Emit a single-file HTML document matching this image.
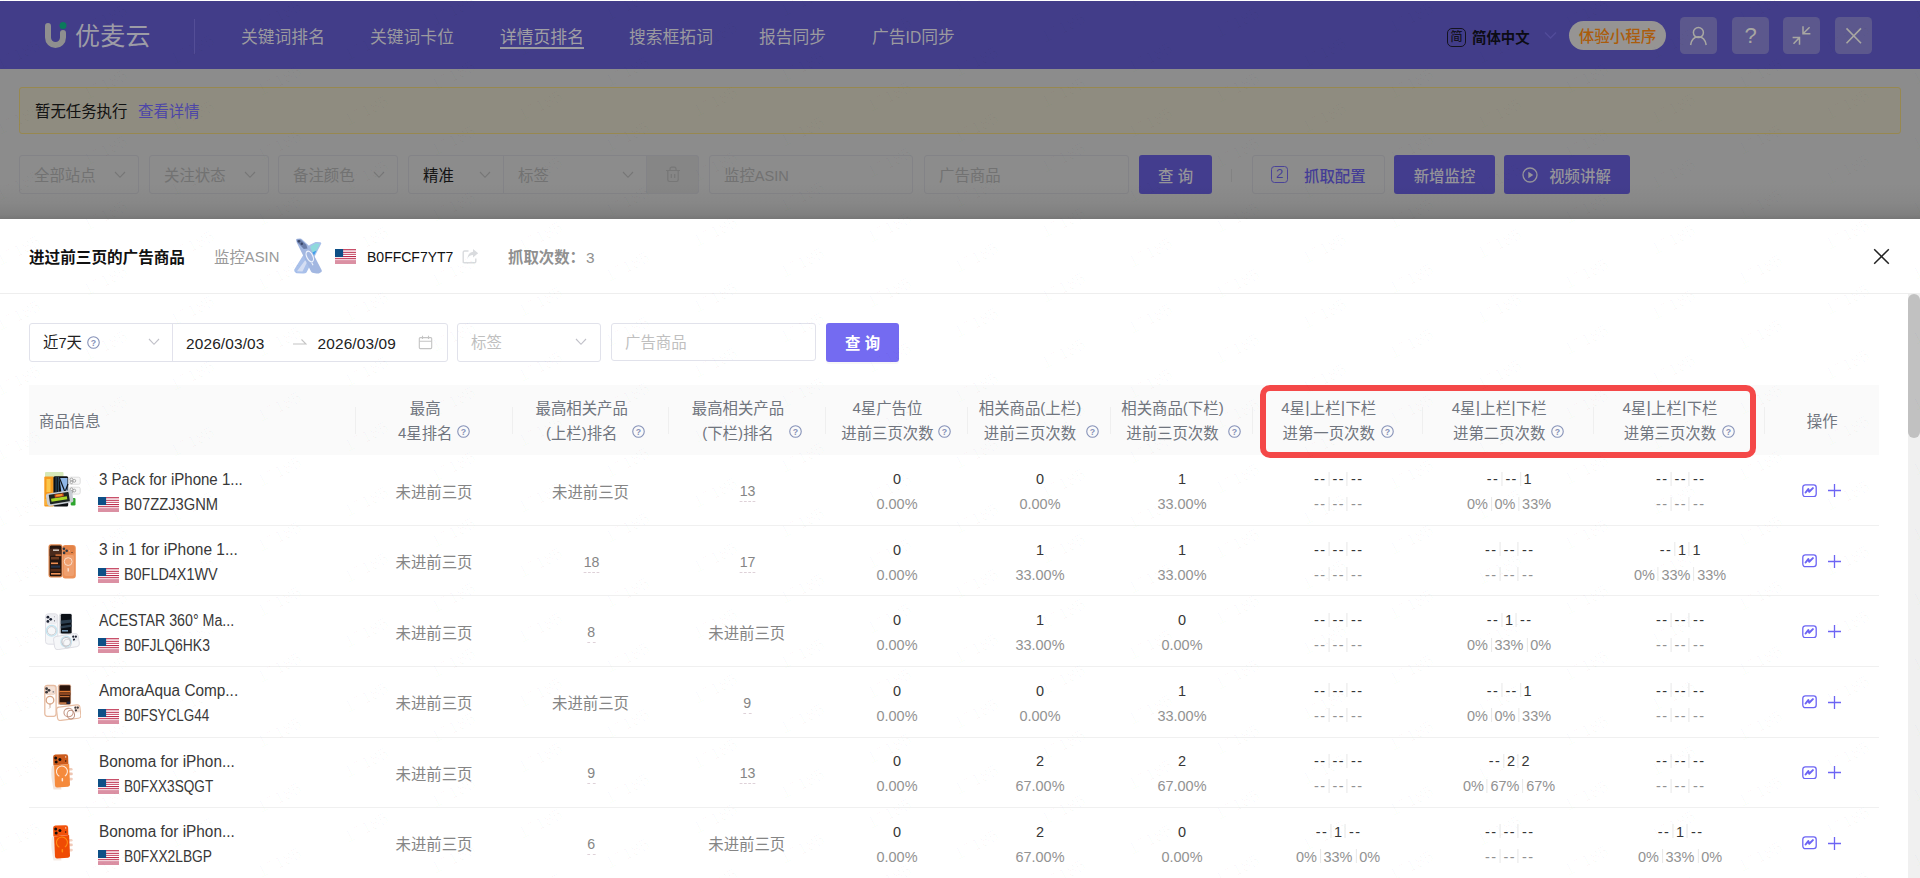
<!DOCTYPE html>
<html lang="zh-CN">
<head>
<meta charset="utf-8">
<title>优麦云 - 详情页排名</title>
<style>
*{box-sizing:border-box;margin:0;padding:0}
html,body{width:1920px;height:878px;overflow:hidden}
body{font-family:"Liberation Sans","Noto Sans CJK SC",sans-serif;font-size:15.4px;color:#222;background:#8c8c8c;position:relative}
.abs{position:absolute}
svg{display:block}

/* ---------- dimmed page (behind mask) ---------- */
#topline{position:absolute;left:0;top:0;width:1920px;height:1px;background:#fff}
#hdr{position:absolute;left:0;top:1px;width:1920px;height:68px;background:#423d89}
#logo{position:absolute;left:44px;top:20px;width:26px;height:30px}
#brand{position:absolute;left:75px;top:16px;font-size:25px;line-height:38px;color:#9d9ca6;letter-spacing:0.2px;white-space:nowrap}
#hdiv{position:absolute;left:194px;top:18px;width:1px;height:35px;background:#544e97}
.nav{position:absolute;top:24px;font-size:16.8px;line-height:25px;color:#9b9a9f;white-space:nowrap}
.nav.on{color:#a09fa3}
.nav.on:after{content:"";position:absolute;left:0;right:0;bottom:1px;height:2px;background:#9c9ba3}
#lang-ic{position:absolute;left:1447px;top:26.5px;width:19px;height:19px;border:1.7px solid #14131f;border-radius:5px;font-size:12.4px;font-weight:500;line-height:17.6px;text-align:center;color:#14131f}
#lang{position:absolute;left:1472px;top:25.5px;font-size:14.4px;line-height:22px;font-weight:bold;color:#0c0c14;white-space:nowrap}
#pill{position:absolute;left:1569px;top:20px;width:97px;height:29px;border-radius:15px;background:#969493;color:#ab5c0c;font-weight:500;font-size:15.5px;line-height:32px;text-align:center;white-space:nowrap}
.hbtn{position:absolute;top:16px;width:37px;height:37px;border-radius:4.5px;background:#5c588d}

#alert{position:absolute;left:19px;top:87px;width:1882px;height:47px;border:1px solid #978850;border-radius:3px;background:#8f8c80}
#alert span{position:absolute;top:12px;line-height:24px;font-size:15.4px;white-space:nowrap}
.fsel{position:absolute;top:155px;height:39px;border:1px solid #838387;border-radius:3px;font-size:15.4px;line-height:37px;color:#727272;white-space:nowrap}
.fsel b{position:absolute;left:14px;top:1px;font-weight:400}
.fsel i{position:absolute;top:14px;width:11px;height:8px}
.btnp{position:absolute;top:155px;height:39px;border-radius:3px;background:#433d8e;color:#959499;font-size:15.4px;font-weight:500;line-height:43.6px;text-align:center;white-space:nowrap}

/* ---------- drawer ---------- */
#shadow{position:absolute;left:0;top:183px;width:1920px;height:36px;background:linear-gradient(to bottom,rgba(0,0,0,0) 0%,rgba(0,0,0,.035) 55%,rgba(0,0,0,.09) 88%,rgba(0,0,0,.16) 100%)}
#drawer{position:absolute;left:0;top:219px;width:1920px;height:659px;background:#fff;overflow:hidden}
#dhead{position:absolute;left:0;top:0;width:1920px;height:75px;border-bottom:1px solid #eeeeee}
#dhead .t{position:absolute;top:27px;line-height:24px;white-space:nowrap}
.l{font-size:14.6px}
.l.h{position:relative;top:-1px;font-size:15px}
.bar{position:relative;top:-1.5px;font-size:17px;margin:0 .2px}
.flag{display:block}
.dbox{position:absolute;border:1px solid #e1e2eb;border-radius:3px;background:#fff}
.dt{position:absolute;line-height:24px;white-space:nowrap}
.th{position:absolute;line-height:25px;color:#70757e;white-space:nowrap}
.thc{position:absolute;width:300px;height:50px;display:flex;justify-content:center}
.thb{display:flex;align-items:flex-end}
.thb .tx{text-align:center;line-height:25px;color:#70757e;white-space:nowrap}
.thb .qi{display:block;margin-bottom:7.8px}
#tbody{position:absolute;left:29px;top:0;width:1849.5px}
.row{position:absolute;left:0;width:1849.5px;height:70.5px}
.rb{position:absolute;left:0;width:1849.5px;height:1px;background:#f0f0f0}
.pt{position:absolute;left:70.1px;top:11.5px;line-height:25px;font-size:16px;color:#383838;white-space:nowrap}
.pa{position:absolute;left:95px;top:36.5px;line-height:25px;font-size:16px;color:#383838;white-space:nowrap}
.cc{position:absolute;top:23px;width:120px;text-align:center;line-height:25px;white-space:nowrap}
.g{color:#858585}
.du{display:inline-block;line-height:20px;border-bottom:1px dashed #dccfd6;transform:scaleX(.92)}
.c2{position:absolute;top:11px;width:120px;text-align:center;white-space:nowrap}
.n1{line-height:25px;color:#363636}
.n2{line-height:25px;color:#929292}
.c2>.n1,.c2>.n2{transform:scaleX(.94)}
.tl{display:flex;justify-content:center;align-items:center;height:25px}
.tl i{display:block;width:1px;height:14px;background:#e6e6e6;margin:0 3.4px 0 3.6px}
.tl .dd{letter-spacing:1.5px;margin-right:-1.5px}
.tl .nn{margin:0 -.45px}
#wml{position:absolute;left:0;top:0;width:1920px;height:878px;overflow:hidden;pointer-events:none}
#wml b{position:absolute;width:48px;height:20px;font-weight:400;font-size:17px;line-height:20px;color:rgba(0,0,0,.027);transform:rotate(-27deg);white-space:nowrap}
</style>
</head>
<body>
<!-- page behind the mask -->
<div id="topline"></div>
<header id="hdr">
  <svg id="logo" viewBox="0 0 26 30"><path d="M4 5V16.500A7.500 7.500 0 0 0 19 16.500V12" fill="none" stroke="#8f8f8f" stroke-width="6" stroke-linecap="round"/><circle cx="19" cy="4.600" r="3.500" fill="#0b7a5c"/></svg>
  <div id="brand">优麦云</div>
  <div id="hdiv"></div>
  <a class="nav" style="left:241px">关键词排名</a>
  <a class="nav" style="left:370px">关键词卡位</a>
  <a class="nav on" style="left:500px">详情页排名</a>
  <a class="nav" style="left:629px">搜索框拓词</a>
  <a class="nav" style="left:759px">报告同步</a>
  <a class="nav" style="left:872px">广告<span style="font-size:15.600px">ID</span>同步</a>
  <div id="lang-ic">简</div>
  <div id="lang">简体中文</div>
  <svg class="abs" style="left:1543.5px;top:30px" width="13" height="9" viewBox="0 0 13 9"><path d="M1 1.500l5.500 5.500L12 1.500" fill="none" stroke="#524c9a" stroke-width="1.300"/></svg>
  <div id="pill">体验小程序</div>
  <div class="hbtn" style="left:1680px"><svg width="37" height="37" viewBox="0 0 37 37"><circle cx="18.4" cy="15.6" r="5" fill="none" stroke="#a8a7a2" stroke-width="1.5"/><path d="M10.6 28c.9-5.200 4-8.200 7.800-8.200s6.900 3 7.800 8.200" fill="none" stroke="#a8a7a2" stroke-width="1.5"/></svg></div>
  <div class="hbtn" style="left:1732px;color:#a8a7a2;font-size:22px;line-height:38px;text-align:center">?</div>
  <div class="hbtn" style="left:1783px"><svg width="37" height="37" viewBox="0 0 37 37"><path d="M20 9.300V16.800H27.400M20.300 16.500L26.600 10.300M9.600 20.600H16.500V27.700M16.200 20.900L10.500 26.700" fill="none" stroke="#a8a7a2" stroke-width="1.500"/></svg></div>
  <div class="hbtn" style="left:1835px"><svg width="37" height="37" viewBox="0 0 37 37"><path d="M11.500 11.400L26 26.300M26 11.400L11.500 26.300" fill="none" stroke="#a8a7a2" stroke-width="1.600"/></svg></div>
</header>

<div id="alert"><span style="left:15px;color:#111">暂无任务执行</span><span style="left:118px;color:#4d46a8">查看详情</span></div>

<div class="fsel" style="left:19px;width:120px"><b>全部站点</b><svg class="abs" style="left:94px;top:15px" width="12" height="8" viewBox="0 0 12 8"><path d="M1 1l5 5.3L11 1" fill="none" stroke="#767676" stroke-width="1.1"/></svg></div>
<div class="fsel" style="left:149px;width:120px"><b>关注状态</b><svg class="abs" style="left:94px;top:15px" width="12" height="8" viewBox="0 0 12 8"><path d="M1 1l5 5.3L11 1" fill="none" stroke="#767676" stroke-width="1.1"/></svg></div>
<div class="fsel" style="left:278px;width:120px"><b>备注颜色</b><svg class="abs" style="left:94px;top:15px" width="12" height="8" viewBox="0 0 12 8"><path d="M1 1l5 5.3L11 1" fill="none" stroke="#767676" stroke-width="1.1"/></svg></div>
<div class="fsel" style="left:408px;width:96px;color:#141414;border-radius:3px 0 0 3px"><b>精准</b><svg class="abs" style="left:70px;top:15px" width="12" height="8" viewBox="0 0 12 8"><path d="M1 1l5 5.3L11 1" fill="none" stroke="#767676" stroke-width="1.1"/></svg></div>
<div class="fsel" style="left:503px;width:144px;border-radius:0"><b>标签</b><svg class="abs" style="left:118px;top:15px" width="12" height="8" viewBox="0 0 12 8"><path d="M1 1l5 5.3L11 1" fill="none" stroke="#767676" stroke-width="1.1"/></svg></div>
<div class="fsel" style="left:646px;width:53px;background:#868686;border-radius:0 3px 3px 0"><svg class="abs" style="left:18px;top:10px" width="16" height="17" viewBox="0 0 16 17"><path d="M1 4.500h14M5 4.500V3c0-1 .8-1.800 1.800-1.800h2.400c1 0 1.800.8 1.800 1.800v1.500M2.800 4.500v9.300c0 1 .8 1.700 1.700 1.700h7c.9 0 1.700-.7 1.700-1.700V4.500M6.300 8v4M9.700 8v4" fill="none" stroke="#777" stroke-width="1.200"/></svg></div>
<div class="fsel" style="left:709px;width:204px"><b>监控<span class="l">ASIN</span></b></div>
<div class="fsel" style="left:924px;width:205px"><b>广告商品</b></div>
<div class="btnp" style="left:1139px;width:73px">查 询</div>
<div class="abs" style="left:1231px;top:169px;width:1px;height:13px;background:#828282"></div>
<div class="fsel" style="left:1252px;width:133px;color:#443d96;font-weight:500"><div class="abs" style="left:18px;top:10px;width:17px;height:17px;border:1.300px solid #4a4399;border-radius:3.500px;font-size:13px;line-height:14.500px;text-align:center;font-weight:400">2</div><b style="left:51px;top:2.3px;font-weight:500">抓取配置</b></div>
<div class="btnp" style="left:1394px;width:101px">新增监控</div>
<div class="btnp" style="left:1504px;width:126px;padding-left:26px"><svg class="abs" style="left:18px;top:12px" width="16" height="16" viewBox="0 0 16 16"><circle cx="8" cy="8" r="7" fill="none" stroke="#959499" stroke-width="1.300"/><path d="M6.300 4.800v6.400L11.300 8z" fill="#959499"/></svg>视频讲解</div>

<div id="shadow"></div>

<!-- drawer -->
<section id="drawer">
<!--DS-->

  <div id="dhead">
    <div class="t" style="left:29px;font-weight:bold;font-size:15.6px;color:#111">进过前三页的广告商品</div>
    <div class="t" style="left:214px;color:#999">监控<span class="l" style="font-size:14.8px;position:relative;top:-1px">ASIN</span></div>
    <svg class="abs" style="left:294px;top:19px" width="28" height="36" viewBox="0 0 28 36">
      <path d="M15.500 7L21.500 4Q27.500 3.600 27.300 5.500L12.500 34.500Q11.500 35.600 9 35.500L2.500 35.300Q-.3 34 .3 31.500z" fill="#a9c0ea"/>
      <path d="M16.500 8.200L22 5.300L25.800 6L18.500 20z" fill="#8ed9dc"/><path d="M18.500 20L22.500 12.500L14 16.500L11 22.500z" fill="#3f9cec"/><path d="M11 22.500L14.500 21L8.500 33.500L3 33.300z" fill="#d5def3"/>
      <path d="M2.100 2Q2 .6 3.500 .7L6 .5Q7.300 .6 8.500 1.800L15.200 8.100L27.600 32Q28.200 33.500 27 34.300L24.800 35.500Q23.500 35.800 21 35.300L18.500 34.800Q17.500 34.500 17 33.500L2.600 4.200z" fill="#a2b7e1"/>
      <path d="M2.800 1.800L6.500 1.400L12.300 6.800L13.500 10.500L9.800 11L3.200 4z" fill="#6b7da9"/><circle cx="5" cy="3.300" r="1.200" fill="#3a4668"/><circle cx="7.800" cy="5.800" r="1.200" fill="#3a4668"/>
      <ellipse cx="15.800" cy="18.500" rx="3" ry="5.700" transform="rotate(-26 15.800 18.500)" fill="none" stroke="#eef3fc" stroke-width="1.200"/><path d="M17.800 24.800L19 27.300" stroke="#eef3fc" stroke-width="1.100" fill="none"/>
    </svg>
    <div class="abs" style="left:335px;top:30px"><svg class="flag" width="21" height="15" viewBox="0 0 21 15"><rect width="21" height="15" fill="#fff"/><rect width="21" height="1.5" fill="#c8506a"/><rect y="1.5" width="21" height="1.5" fill="#f3d5dc"/><rect y="3" width="21" height="1.1" fill="#c8506a"/><rect y="4.1" width="21" height="1" fill="#f5e3e7"/><rect y="5.1" width="21" height=".9" fill="#c8506a"/><rect y="7.1" width="21" height="1" fill="#b5163a"/><rect y="9" width="21" height="1.1" fill="#c8506a"/><rect y="10.1" width="21" height="1" fill="#f0cdd5"/><rect y="11.1" width="21" height="3.9" fill="#db90a3"/><rect width="8.1" height="8" fill="#0d4f86"/></svg></div>
    <div class="t" style="left:367px;top:26px;color:#111"><span class="" style="display:inline-block;transform:scaleX(0.91);transform-origin:left center;">B0FFCF7YT7</span></div>
    <svg class="abs" style="left:462px;top:29px" width="17" height="16" viewBox="0 0 17 16"><path d="M6.500 3H2.500c-.8 0-1.300.6-1.300 1.300v9.200c0 .8.600 1.300 1.300 1.300h10c.8 0 1.300-.6 1.300-1.300V10.500" fill="none" stroke="#d9dbde" stroke-width="1.400"/><path d="M11 1l5.200 4.200L11 9.400V6.900C8.200 6.900 6.600 8 5.500 10.600 5.800 6.300 8.100 4 11 3.700z" fill="#d9dbde"/></svg>
    <div class="t" style="left:508px;color:#909090;font-weight:bold">抓取次数：<span class="l" style="position:relative;top:-.5px;margin-left:1px;font-size:15.4px;font-weight:400">3</span></div>
    <svg class="abs" style="left:1873px;top:29px" width="17" height="17" viewBox="0 0 17 17"><path d="M1.200 1.200l14.600 14.600M15.800 1.200L1.200 15.800" fill="none" stroke="#222" stroke-width="1.500"/></svg>
  </div>

<div class="abs" style="left:1908px;top:75px;width:12px;height:584px;background:#f0f0f0"></div>
<div class="abs" style="left:1908px;top:75px;width:12px;height:143.8px;border-radius:6px;background:#c1c1c1"></div>

  <div class="dbox" style="left:29px;top:104px;width:419px;height:39px"></div>
  <div class="abs" style="left:172px;top:105px;width:1px;height:37px;background:#e2e2ec"></div>
  <div class="dt" style="left:43px;top:112px;color:#222">近<span class="l" style="position:relative;top:-.5px">7</span>天</div>
  <div class="abs" style="left:87px;top:117px"><svg class="q" width="13" height="13" viewBox="0 0 13 13"><circle cx="6.5" cy="6.5" r="5.75" fill="none" stroke="#8692b8" stroke-width="1.1"/><text x="6.5" y="9.7" font-size="8.8" font-weight="bold" text-anchor="middle" fill="#8692b8" font-family="Liberation Sans, sans-serif">?</text></svg></div>
  <svg class="abs" style="left:148px;top:119px" width="12" height="8" viewBox="0 0 12 8"><path d="M1 1l5 5.3L11 1" fill="none" stroke="#c0c0c8" stroke-width="1.1"/></svg>
  <div class="dt" style="left:186px;top:113px;color:#222;letter-spacing:.15px">2026/03/03</div>
  <svg class="abs" style="left:292px;top:118px" width="15" height="9" viewBox="0 0 15 9"><path d="M1 7h13L9.500 2.500" fill="none" stroke="#c4c4c4" stroke-width="1.100"/></svg>
  <div class="dt" style="left:317.500px;top:113px;color:#222;letter-spacing:.15px">2026/03/09</div>
  <svg class="abs" style="left:418px;top:116px" width="15" height="15" viewBox="0 0 15 15"><rect x="1.300" y="2.600" width="12.400" height="11" rx="1" fill="none" stroke="#c4c4c4" stroke-width="1.100"/><path d="M1.300 6.300h12.400M4.500 .8v3.200M10.500 .8v3.200" fill="none" stroke="#c4c4c4" stroke-width="1.100"/></svg>
  <div class="dbox" style="left:457px;top:104px;width:144px;height:39px"></div>
  <div class="dt" style="left:471px;top:112px;color:#bfbfbf">标签</div>
  <svg class="abs" style="left:575px;top:119px" width="12" height="8" viewBox="0 0 12 8"><path d="M1 1l5 5.3L11 1" fill="none" stroke="#c0c0c8" stroke-width="1.1"/></svg>
  <div class="dbox" style="left:611px;top:104px;width:205px;height:38px"></div>
  <div class="dt" style="left:625px;top:112px;color:#bfbfbf">广告商品</div>
  <div class="abs" style="left:826px;top:104px;width:73px;height:39px;border-radius:3px;background:#746bf1;color:#fff;font-size:15.400px;line-height:41.500px;text-align:center;font-weight:bold;box-shadow:0 2px 0 rgba(0,0,0,.03)">查 询</div>

<div class="abs" style="left:29px;top:166px;width:1849.5px;height:70px;background:#fafafa"></div>
<div class="abs" style="left:355px;top:188px;width:1px;height:27px;background:#efefef"></div>
<div class="abs" style="left:512px;top:188px;width:1px;height:27px;background:#efefef"></div>
<div class="abs" style="left:668px;top:188px;width:1px;height:27px;background:#efefef"></div>
<div class="abs" style="left:824.5px;top:188px;width:1px;height:27px;background:#efefef"></div>
<div class="abs" style="left:967px;top:188px;width:1px;height:27px;background:#efefef"></div>
<div class="abs" style="left:1109.5px;top:188px;width:1px;height:27px;background:#efefef"></div>
<div class="abs" style="left:1252px;top:188px;width:1px;height:27px;background:#efefef"></div>
<div class="abs" style="left:1422px;top:188px;width:1px;height:27px;background:#efefef"></div>
<div class="abs" style="left:1593px;top:188px;width:1px;height:27px;background:#efefef"></div>
<div class="abs" style="left:1763.5px;top:188px;width:1px;height:27px;background:#efefef"></div>
<div class="th" style="left:39px;top:189.500px;text-align:left">商品信息</div>
<div class="thc" style="left:284px;top:177px"><div class="thb"><div class="tx">最高<br><span class="l h">4</span>星排名</div><span class="qi" style="margin-left:4.6px"><svg class="q" width="13" height="13" viewBox="0 0 13 13"><circle cx="6.5" cy="6.5" r="5.75" fill="none" stroke="#8692b8" stroke-width="1.1"/><text x="6.5" y="9.7" font-size="8.8" font-weight="bold" text-anchor="middle" fill="#8692b8" font-family="Liberation Sans, sans-serif">?</text></svg></span></div></div>
<div class="thc" style="left:440.5px;top:177px"><div class="thb"><div class="tx">最高相关产品<br><span class="l h">(</span>上栏<span class="l h">)</span>排名</div><span class="qi" style="margin-left:4.6px"><svg class="q" width="13" height="13" viewBox="0 0 13 13"><circle cx="6.5" cy="6.5" r="5.75" fill="none" stroke="#8692b8" stroke-width="1.1"/><text x="6.5" y="9.7" font-size="8.8" font-weight="bold" text-anchor="middle" fill="#8692b8" font-family="Liberation Sans, sans-serif">?</text></svg></span></div></div>
<div class="thc" style="left:596.75px;top:177px"><div class="thb"><div class="tx">最高相关产品<br><span class="l h">(</span>下栏<span class="l h">)</span>排名</div><span class="qi" style="margin-left:4.6px"><svg class="q" width="13" height="13" viewBox="0 0 13 13"><circle cx="6.5" cy="6.5" r="5.75" fill="none" stroke="#8692b8" stroke-width="1.1"/><text x="6.5" y="9.7" font-size="8.8" font-weight="bold" text-anchor="middle" fill="#8692b8" font-family="Liberation Sans, sans-serif">?</text></svg></span></div></div>
<div class="thc" style="left:746.25px;top:177px"><div class="thb"><div class="tx"><span class="l h">4</span>星广告位<br>进前三页次数</div><span class="qi" style="margin-left:4.6px"><svg class="q" width="13" height="13" viewBox="0 0 13 13"><circle cx="6.5" cy="6.5" r="5.75" fill="none" stroke="#8692b8" stroke-width="1.1"/><text x="6.5" y="9.7" font-size="8.8" font-weight="bold" text-anchor="middle" fill="#8692b8" font-family="Liberation Sans, sans-serif">?</text></svg></span></div></div>
<div class="thc" style="left:888.75px;top:177px"><div class="thb"><div class="tx">相关商品<span class="l h">(</span>上栏<span class="l h">)</span><br>进前三页次数</div><span class="qi" style="margin-left:4.6px"><svg class="q" width="13" height="13" viewBox="0 0 13 13"><circle cx="6.5" cy="6.5" r="5.75" fill="none" stroke="#8692b8" stroke-width="1.1"/><text x="6.5" y="9.7" font-size="8.8" font-weight="bold" text-anchor="middle" fill="#8692b8" font-family="Liberation Sans, sans-serif">?</text></svg></span></div></div>
<div class="thc" style="left:1031.25px;top:177px"><div class="thb"><div class="tx">相关商品<span class="l h">(</span>下栏<span class="l h">)</span><br>进前三页次数</div><span class="qi" style="margin-left:4.6px"><svg class="q" width="13" height="13" viewBox="0 0 13 13"><circle cx="6.5" cy="6.5" r="5.75" fill="none" stroke="#8692b8" stroke-width="1.1"/><text x="6.5" y="9.7" font-size="8.8" font-weight="bold" text-anchor="middle" fill="#8692b8" font-family="Liberation Sans, sans-serif">?</text></svg></span></div></div>
<div class="thc" style="left:1187.5px;top:177px"><div class="thb"><div class="tx"><span class="l h">4</span>星<span class="bar">|</span>上栏<span class="bar">|</span>下栏<br>进第一页次数</div><span class="qi" style="margin-left:4.6px"><svg class="q" width="13" height="13" viewBox="0 0 13 13"><circle cx="6.5" cy="6.5" r="5.75" fill="none" stroke="#8692b8" stroke-width="1.1"/><text x="6.5" y="9.7" font-size="8.8" font-weight="bold" text-anchor="middle" fill="#8692b8" font-family="Liberation Sans, sans-serif">?</text></svg></span></div></div>
<div class="thc" style="left:1358px;top:177px"><div class="thb"><div class="tx"><span class="l h">4</span>星<span class="bar">|</span>上栏<span class="bar">|</span>下栏<br>进第二页次数</div><span class="qi" style="margin-left:4.6px"><svg class="q" width="13" height="13" viewBox="0 0 13 13"><circle cx="6.5" cy="6.5" r="5.75" fill="none" stroke="#8692b8" stroke-width="1.1"/><text x="6.5" y="9.7" font-size="8.8" font-weight="bold" text-anchor="middle" fill="#8692b8" font-family="Liberation Sans, sans-serif">?</text></svg></span></div></div>
<div class="thc" style="left:1528.75px;top:177px"><div class="thb"><div class="tx"><span class="l h">4</span>星<span class="bar">|</span>上栏<span class="bar">|</span>下栏<br>进第三页次数</div><span class="qi" style="margin-left:4.6px"><svg class="q" width="13" height="13" viewBox="0 0 13 13"><circle cx="6.5" cy="6.5" r="5.75" fill="none" stroke="#8692b8" stroke-width="1.1"/><text x="6.5" y="9.7" font-size="8.8" font-weight="bold" text-anchor="middle" fill="#8692b8" font-family="Liberation Sans, sans-serif">?</text></svg></span></div></div>
<div class="th" style="left:1772.2px;top:189.500px;width:100px;text-align:center">操作</div>
<div class="abs" style="left:1260px;top:166px;width:496px;height:72.500px;border:6px solid #f44848;border-radius:10px"></div>
<div id="tbody"><div class="row" style="top:236px"><div class="abs" style="left:14.8px;top:17px"><svg width="37" height="36" viewBox="0 0 37 36"><rect x="1" y="0" width="18.5" height="6" rx="1" fill="#d6e8b8"/><rect x=".3" y="4.500" width="9.500" height="30" rx="1" fill="#f59a1e"/><rect x="2.500" y="7" width="4" height="13" fill="#fbc64a"/><rect x="1" y="27" width="7" height="6" fill="#f8b13a"/><rect x="9.400" y="4.200" width="14.800" height="30.300" rx="1.500" fill="#0d0f12"/><rect x="11.500" y="5" width="1.200" height="15" fill="#27435a"/><rect x="13.800" y="5" width="1.200" height="15" fill="#27435a"/><path d="M15.500 6h8v15.500h-6z" fill="#8fb6e6"/><path d="M15.500 6l5.500 14 3-8" fill="none" stroke="#10141a" stroke-width="1.200"/><rect x="25.200" y="5.200" width="11" height="7.100" rx="1.500" fill="#f7f7f7" stroke="#d2d2d2" stroke-width=".7"/><rect x="25.200" y="15.200" width="11" height="6.900" rx="1.500" fill="#f7f7f7" stroke="#d2d2d2" stroke-width=".7"/><circle cx="27.500" cy="7.500" r="1.400" fill="none" stroke="#8a8a8a" stroke-width=".7"/><circle cx="30.300" cy="8.800" r="1.400" fill="none" stroke="#8a8a8a" stroke-width=".7"/><circle cx="27.500" cy="10.300" r="1.300" fill="none" stroke="#8a8a8a" stroke-width=".7"/><circle cx="27.500" cy="17.300" r="1.400" fill="none" stroke="#8a8a8a" stroke-width=".7"/><circle cx="30.300" cy="18.600" r="1.400" fill="none" stroke="#8a8a8a" stroke-width=".7"/><circle cx="27.500" cy="20" r="1.300" fill="none" stroke="#8a8a8a" stroke-width=".7"/><rect x="26.700" y="25.900" width="4.800" height="7.500" rx="1.200" fill="#2ea52e"/><g transform="rotate(-9 15.500 26)"><rect x="2.400" y="19.800" width="26.500" height="12.500" rx="2.500" fill="#c9cdd3"/><rect x="5.300" y="21.300" width="20" height="9.500" rx=".8" fill="#1c2420"/><rect x="7" y="25.500" width="16" height="3" fill="#a8d627"/><rect x="11" y="21.800" width="9" height="3.200" fill="#d9531f"/><rect x="12.500" y="22.500" width="6" height="1.500" fill="#f3a62a"/></g></svg></div><div class="pt"><span class="" style="display:inline-block;transform:scaleX(0.94);transform-origin:left center;">3 Pack for iPhone 1...</span></div><div class="abs" style="left:69px;top:42px"><svg class="flag" width="21" height="15" viewBox="0 0 21 15"><rect width="21" height="15" fill="#fff"/><rect width="21" height="1.5" fill="#c8506a"/><rect y="1.5" width="21" height="1.5" fill="#f3d5dc"/><rect y="3" width="21" height="1.1" fill="#c8506a"/><rect y="4.1" width="21" height="1" fill="#f5e3e7"/><rect y="5.1" width="21" height=".9" fill="#c8506a"/><rect y="7.1" width="21" height="1" fill="#b5163a"/><rect y="9" width="21" height="1.1" fill="#c8506a"/><rect y="10.1" width="21" height="1" fill="#f0cdd5"/><rect y="11.1" width="21" height="3.9" fill="#db90a3"/><rect width="8.1" height="8" fill="#0d4f86"/></svg></div><div class="pa"><span class="" style="display:inline-block;transform:scaleX(0.92);transform-origin:left center;">B07ZZJ3GNM</span></div><div class="cc g" style="left:345px;top:24.500px">未进前三页</div><div class="cc g" style="left:501.5px;top:24.500px">未进前三页</div><div class="cc g" style="left:658.75px"><span class="du">13</span></div><div class="c2" style="left:808.05px"><div class="n1">0</div><div class="n2">0.00%</div></div><div class="c2" style="left:950.55px"><div class="n1">0</div><div class="n2">0.00%</div></div><div class="c2" style="left:1093.05px"><div class="n1">1</div><div class="n2">33.00%</div></div><div class="c2" style="left:1249.3px"><div class="tl n1"><span class="dd">--</span><i></i><span class="dd">--</span><i></i><span class="dd">--</span></div><div class="tl n2"><span class="dd">--</span><i></i><span class="dd">--</span><i></i><span class="dd">--</span></div></div><div class="c2" style="left:1419.8px"><div class="tl n1"><span class="dd">--</span><i></i><span class="dd">--</span><i></i><span class="nn">1</span></div><div class="tl n2"><span class="nn">0%</span><i></i><span class="nn">0%</span><i></i><span class="nn">33%</span></div></div><div class="c2" style="left:1590.55px"><div class="tl n1"><span class="dd">--</span><i></i><span class="dd">--</span><i></i><span class="dd">--</span></div><div class="tl n2"><span class="dd">--</span><i></i><span class="dd">--</span><i></i><span class="dd">--</span></div></div><svg class="abs" style="left:1772.9px;top:28.5px" width="15" height="13.500" viewBox="0 0 15 13.500"><rect x=".8" y=".8" width="13.400" height="11.900" rx="2.600" fill="none" stroke="#6c64f4" stroke-width="1.300"/><path d="M3.600 8.500l2.700-3.400.9 2.600 3.700-3.600" fill="none" stroke="#6c64f4" stroke-width="2" stroke-linejoin="round" stroke-linecap="round"/></svg><svg class="abs" style="left:1799px;top:29px" width="13" height="13" viewBox="0 0 13 13"><path d="M6.500 0v13M0 6.500h13" fill="none" stroke="#6c64f4" stroke-width="1.300"/></svg></div>
<div class="row" style="top:306.5px"><div class="abs" style="left:19px;top:18.3px"><svg width="28" height="35" viewBox="0 0 28 35"><rect x=".5" y=".3" width="14" height="33.200" rx="2.500" fill="#e1884e"/><rect x="1.700" y="1.500" width="11.800" height="30.800" rx="1.500" fill="#24150f"/><path d="M1.700 5l7-1 4.800 2v5l-11.800 1z" fill="#4a2a1c"/><rect x="5" y="5.500" width="6" height="1.300" fill="#e9e2dc"/><rect x="7.500" y="10.300" width="6" height="1.800" fill="#c66a35"/><rect x="3" y="13" width="8" height="2.500" fill="#6a3a22"/><rect x="3" y="18.500" width="7" height="1.600" fill="#ee8e52"/><rect x="3" y="21.500" width="9" height="2.200" fill="#23324a"/><rect x="2.500" y="25" width="10" height="2.600" fill="#5a2d18"/><rect x="3" y="29" width="9.500" height="1.600" fill="#f09258"/><rect x="14.400" y="1" width="13.400" height="33.600" rx="3" fill="#ec9159"/><rect x="16" y="11" width="10" height="21" rx="2" fill="#f2ab7f" fill-opacity=".55"/><rect x="14.700" y="1.800" width="12" height="8.700" rx="2.200" fill="#e28247"/><circle cx="15.900" cy="4.700" r="1.300" fill="#2f3743"/><circle cx="18.700" cy="6.800" r="1.300" fill="#2f3743"/><circle cx="16.100" cy="8.900" r="1.300" fill="#2f3743"/><circle cx="21.500" cy="6.800" r=".6" fill="#c8c8c8"/><circle cx="24" cy="8.500" r=".6" fill="#35271f"/><circle cx="20.200" cy="17.600" r="3.900" fill="none" stroke="#f9dcc9" stroke-width="1"/><rect x="19.500" y="24" width="1.500" height="3.600" rx=".4" fill="#f9dcc9"/></svg></div><div class="pt"><span class="" style="display:inline-block;transform:scaleX(0.97);transform-origin:left center;">3 in 1 for iPhone 1...</span></div><div class="abs" style="left:69px;top:42px"><svg class="flag" width="21" height="15" viewBox="0 0 21 15"><rect width="21" height="15" fill="#fff"/><rect width="21" height="1.5" fill="#c8506a"/><rect y="1.5" width="21" height="1.5" fill="#f3d5dc"/><rect y="3" width="21" height="1.1" fill="#c8506a"/><rect y="4.1" width="21" height="1" fill="#f5e3e7"/><rect y="5.1" width="21" height=".9" fill="#c8506a"/><rect y="7.1" width="21" height="1" fill="#b5163a"/><rect y="9" width="21" height="1.1" fill="#c8506a"/><rect y="10.1" width="21" height="1" fill="#f0cdd5"/><rect y="11.1" width="21" height="3.9" fill="#db90a3"/><rect width="8.1" height="8" fill="#0d4f86"/></svg></div><div class="pa"><span class="" style="display:inline-block;transform:scaleX(0.9);transform-origin:left center;">B0FLD4X1WV</span></div><div class="cc g" style="left:345px;top:24.500px">未进前三页</div><div class="cc g" style="left:502.5px"><span class="du">18</span></div><div class="cc g" style="left:658.75px"><span class="du">17</span></div><div class="c2" style="left:808.05px"><div class="n1">0</div><div class="n2">0.00%</div></div><div class="c2" style="left:950.55px"><div class="n1">1</div><div class="n2">33.00%</div></div><div class="c2" style="left:1093.05px"><div class="n1">1</div><div class="n2">33.00%</div></div><div class="c2" style="left:1249.3px"><div class="tl n1"><span class="dd">--</span><i></i><span class="dd">--</span><i></i><span class="dd">--</span></div><div class="tl n2"><span class="dd">--</span><i></i><span class="dd">--</span><i></i><span class="dd">--</span></div></div><div class="c2" style="left:1419.8px"><div class="tl n1"><span class="dd">--</span><i></i><span class="dd">--</span><i></i><span class="dd">--</span></div><div class="tl n2"><span class="dd">--</span><i></i><span class="dd">--</span><i></i><span class="dd">--</span></div></div><div class="c2" style="left:1590.55px"><div class="tl n1"><span class="dd">--</span><i></i><span class="nn">1</span><i></i><span class="nn">1</span></div><div class="tl n2"><span class="nn">0%</span><i></i><span class="nn">33%</span><i></i><span class="nn">33%</span></div></div><svg class="abs" style="left:1772.9px;top:28.5px" width="15" height="13.500" viewBox="0 0 15 13.500"><rect x=".8" y=".8" width="13.400" height="11.900" rx="2.600" fill="none" stroke="#6c64f4" stroke-width="1.300"/><path d="M3.600 8.500l2.700-3.400.9 2.600 3.700-3.600" fill="none" stroke="#6c64f4" stroke-width="2" stroke-linejoin="round" stroke-linecap="round"/></svg><svg class="abs" style="left:1799px;top:29px" width="13" height="13" viewBox="0 0 13 13"><path d="M6.500 0v13M0 6.500h13" fill="none" stroke="#6c64f4" stroke-width="1.300"/></svg></div>
<div class="row" style="top:377px"><div class="abs" style="left:15.8px;top:17px"><svg width="35" height="37" viewBox="0 0 35 37"><rect x=".5" y=".8" width="12.300" height="30.400" rx="2.800" fill="#f6f7f9" stroke="#dcdde3" stroke-width=".9"/><rect x="1.100" y="1.600" width="10.800" height="9" rx="2.400" fill="#eeeff3" stroke="#e2e3e8" stroke-width=".5"/><circle cx="2.900" cy="4.200" r="1.400" fill="#1d2333"/><circle cx="5.700" cy="6.300" r="1.400" fill="#1d2333"/><circle cx="2.900" cy="8.400" r="1.400" fill="#1d2333"/><circle cx="9.500" cy="3.800" r=".5" fill="#9a9aa2"/><circle cx="9.500" cy="7.800" r=".6" fill="#5c5c66"/><circle cx="6.600" cy="17.800" r="5.400" fill="none" stroke="#c3e5f2" stroke-width="1.200"/><circle cx="6.600" cy="17.800" r="4.200" fill="none" stroke="#c8c8cc" stroke-width=".9"/><rect x="14.200" y=".3" width="12.800" height="21" rx="2" fill="#d4d6db"/><rect x="15.800" y="1" width="10.800" height="19.600" rx="1.300" fill="#0b1016"/><path d="M15.800 7.500l10.800-1v3l-10.800 1.500zM15.800 13l10.800-1.500v2.200l-10.800 1.800z" fill="#2c3e4e"/><rect x="17" y="17" width="6" height="1.600" fill="#6f90ad"/><g transform="rotate(-9 21 29)"><rect x="9" y="22" width="25" height="13.300" rx="3" fill="#f6f7f9" stroke="#dcdde3" stroke-width=".9"/><circle cx="21.200" cy="28.800" r="5.400" fill="none" stroke="#c3e5f2" stroke-width="1"/><circle cx="21.200" cy="28.800" r="4.300" fill="none" stroke="#bdbdc2" stroke-width="1.100"/><ellipse cx="22" cy="30.800" rx="3.600" ry="4.300" fill="none" stroke="#cfcfd3" stroke-width=".8"/><rect x="27.300" y="23" width="6" height="7" rx="1.600" fill="#ecedf1"/><circle cx="29" cy="24.800" r="1.100" fill="#1d2333"/><circle cx="31.600" cy="25.200" r="1.100" fill="#1d2333"/><circle cx="29.300" cy="27.800" r="1.100" fill="#1d2333"/></g></svg></div><div class="pt"><span class="" style="display:inline-block;transform:scaleX(0.89);transform-origin:left center;">ACESTAR 360° Ma...</span></div><div class="abs" style="left:69px;top:42px"><svg class="flag" width="21" height="15" viewBox="0 0 21 15"><rect width="21" height="15" fill="#fff"/><rect width="21" height="1.5" fill="#c8506a"/><rect y="1.5" width="21" height="1.5" fill="#f3d5dc"/><rect y="3" width="21" height="1.1" fill="#c8506a"/><rect y="4.1" width="21" height="1" fill="#f5e3e7"/><rect y="5.1" width="21" height=".9" fill="#c8506a"/><rect y="7.1" width="21" height="1" fill="#b5163a"/><rect y="9" width="21" height="1.1" fill="#c8506a"/><rect y="10.1" width="21" height="1" fill="#f0cdd5"/><rect y="11.1" width="21" height="3.9" fill="#db90a3"/><rect width="8.1" height="8" fill="#0d4f86"/></svg></div><div class="pa"><span class="" style="display:inline-block;transform:scaleX(0.87);transform-origin:left center;">B0FJLQ6HK3</span></div><div class="cc g" style="left:345px;top:24.500px">未进前三页</div><div class="cc g" style="left:502.5px"><span class="du">8</span></div><div class="cc g" style="left:657.75px;top:24.500px">未进前三页</div><div class="c2" style="left:808.05px"><div class="n1">0</div><div class="n2">0.00%</div></div><div class="c2" style="left:950.55px"><div class="n1">1</div><div class="n2">33.00%</div></div><div class="c2" style="left:1093.05px"><div class="n1">0</div><div class="n2">0.00%</div></div><div class="c2" style="left:1249.3px"><div class="tl n1"><span class="dd">--</span><i></i><span class="dd">--</span><i></i><span class="dd">--</span></div><div class="tl n2"><span class="dd">--</span><i></i><span class="dd">--</span><i></i><span class="dd">--</span></div></div><div class="c2" style="left:1419.8px"><div class="tl n1"><span class="dd">--</span><i></i><span class="nn">1</span><i></i><span class="dd">--</span></div><div class="tl n2"><span class="nn">0%</span><i></i><span class="nn">33%</span><i></i><span class="nn">0%</span></div></div><div class="c2" style="left:1590.55px"><div class="tl n1"><span class="dd">--</span><i></i><span class="dd">--</span><i></i><span class="dd">--</span></div><div class="tl n2"><span class="dd">--</span><i></i><span class="dd">--</span><i></i><span class="dd">--</span></div></div><svg class="abs" style="left:1772.9px;top:28.5px" width="15" height="13.500" viewBox="0 0 15 13.500"><rect x=".8" y=".8" width="13.400" height="11.900" rx="2.600" fill="none" stroke="#6c64f4" stroke-width="1.300"/><path d="M3.600 8.500l2.700-3.400.9 2.600 3.700-3.600" fill="none" stroke="#6c64f4" stroke-width="2" stroke-linejoin="round" stroke-linecap="round"/></svg><svg class="abs" style="left:1799px;top:29px" width="13" height="13" viewBox="0 0 13 13"><path d="M6.500 0v13M0 6.500h13" fill="none" stroke="#6c64f4" stroke-width="1.300"/></svg></div>
<div class="row" style="top:447.5px"><div class="abs" style="left:14.8px;top:17.5px"><svg width="37" height="37" viewBox="0 0 37 37"><rect x=".8" y="1.300" width="11.300" height="31" rx="2.500" fill="#fffdfc" stroke="#e6bca2" stroke-width="1.300"/><rect x="1.200" y="1.900" width="10.300" height="8.400" rx="2.200" fill="#f4e1d6" stroke="#e6bca2" stroke-width=".6"/><circle cx="2.600" cy="4.700" r="1.400" fill="#3d3a3c"/><circle cx="5" cy="6.300" r="1.400" fill="#3d3a3c"/><circle cx="2.600" cy="8.200" r="1.400" fill="#3d3a3c"/><circle cx="9.300" cy="7.800" r=".9" fill="#8e8a8c"/><circle cx="6" cy="16.200" r="3.800" fill="none" stroke="#d7a383" stroke-width="1.300"/><path d="M6 20v3.500l-1 1" fill="none" stroke="#caa08a" stroke-width=".9"/><rect x="13.800" y=".3" width="13.300" height="20.600" rx="2" fill="#e3b79c"/><rect x="15.400" y="1.200" width="11" height="19" rx="1.200" fill="#2a130a"/><rect x="15.400" y="6.800" width="11" height="1.600" fill="#e07a33"/><rect x="15.400" y="8.800" width="11" height="2.400" fill="#8a4520"/><rect x="16" y="12" width="9.500" height="1.200" fill="#c9733a"/><rect x="15.400" y="18.400" width="7" height="1.400" fill="#e89057"/><rect x="23" y="17.600" width="3" height="2.200" fill="#1c2340"/><g transform="rotate(-7 24 29)"><rect x="13" y="22" width="23.500" height="13.500" rx="2.800" fill="#fffdfc" stroke="#e6bca2" stroke-width="1.200"/><ellipse cx="24.600" cy="28.600" rx="4.600" ry="4.200" fill="none" stroke="#c79a88" stroke-width="1.100"/><ellipse cx="26.600" cy="31" rx="3.700" ry="4.400" fill="none" stroke="#b98d7c" stroke-width="1"/><rect x="30.600" y="23" width="5.400" height="6.500" rx="1.400" fill="#f1dcd0"/><circle cx="32" cy="24.600" r="1.100" fill="#3d3a3c"/><circle cx="34.400" cy="24.900" r="1.100" fill="#3d3a3c"/><circle cx="32.200" cy="27.400" r="1.100" fill="#3d3a3c"/></g></svg></div><div class="pt"><span class="" style="display:inline-block;transform:scaleX(0.96);transform-origin:left center;">AmoraAqua Comp...</span></div><div class="abs" style="left:69px;top:42px"><svg class="flag" width="21" height="15" viewBox="0 0 21 15"><rect width="21" height="15" fill="#fff"/><rect width="21" height="1.5" fill="#c8506a"/><rect y="1.5" width="21" height="1.5" fill="#f3d5dc"/><rect y="3" width="21" height="1.1" fill="#c8506a"/><rect y="4.1" width="21" height="1" fill="#f5e3e7"/><rect y="5.1" width="21" height=".9" fill="#c8506a"/><rect y="7.1" width="21" height="1" fill="#b5163a"/><rect y="9" width="21" height="1.1" fill="#c8506a"/><rect y="10.1" width="21" height="1" fill="#f0cdd5"/><rect y="11.1" width="21" height="3.9" fill="#db90a3"/><rect width="8.1" height="8" fill="#0d4f86"/></svg></div><div class="pa"><span class="" style="display:inline-block;transform:scaleX(0.84);transform-origin:left center;">B0FSYCLG44</span></div><div class="cc g" style="left:345px;top:24.500px">未进前三页</div><div class="cc g" style="left:501.5px;top:24.500px">未进前三页</div><div class="cc g" style="left:658.75px"><span class="du">9</span></div><div class="c2" style="left:808.05px"><div class="n1">0</div><div class="n2">0.00%</div></div><div class="c2" style="left:950.55px"><div class="n1">0</div><div class="n2">0.00%</div></div><div class="c2" style="left:1093.05px"><div class="n1">1</div><div class="n2">33.00%</div></div><div class="c2" style="left:1249.3px"><div class="tl n1"><span class="dd">--</span><i></i><span class="dd">--</span><i></i><span class="dd">--</span></div><div class="tl n2"><span class="dd">--</span><i></i><span class="dd">--</span><i></i><span class="dd">--</span></div></div><div class="c2" style="left:1419.8px"><div class="tl n1"><span class="dd">--</span><i></i><span class="dd">--</span><i></i><span class="nn">1</span></div><div class="tl n2"><span class="nn">0%</span><i></i><span class="nn">0%</span><i></i><span class="nn">33%</span></div></div><div class="c2" style="left:1590.55px"><div class="tl n1"><span class="dd">--</span><i></i><span class="dd">--</span><i></i><span class="dd">--</span></div><div class="tl n2"><span class="dd">--</span><i></i><span class="dd">--</span><i></i><span class="dd">--</span></div></div><svg class="abs" style="left:1772.9px;top:28.5px" width="15" height="13.500" viewBox="0 0 15 13.500"><rect x=".8" y=".8" width="13.400" height="11.900" rx="2.600" fill="none" stroke="#6c64f4" stroke-width="1.300"/><path d="M3.600 8.500l2.700-3.400.9 2.600 3.700-3.600" fill="none" stroke="#6c64f4" stroke-width="2" stroke-linejoin="round" stroke-linecap="round"/></svg><svg class="abs" style="left:1799px;top:29px" width="13" height="13" viewBox="0 0 13 13"><path d="M6.500 0v13M0 6.500h13" fill="none" stroke="#6c64f4" stroke-width="1.300"/></svg></div>
<div class="row" style="top:518px"><div class="abs" style="left:21.8px;top:17.2px"><svg width="22" height="36" viewBox="0 0 22 36"><path d="M1 12q-1.500 8 0 15l1.500 8.500h8l-5-24z" fill="#f3e3d9"/><rect x="17" y="14" width="4.600" height="2.600" rx="1.300" fill="#f0cdbb"/><rect x="17.200" y="18.600" width="4.600" height="2.600" rx="1.300" fill="#eec5b2"/><rect x="16.500" y="23.800" width="5.300" height="2.600" rx="1.300" fill="#f2cdbc"/><path d="M3.100 11.500l15-1.500 .9 20.500q0 2-2 2.200l-11 .8q-1.800 0-2-2z" fill="#f58a3c"/><path d="M2.100 3q0-2.200 2.200-2.400l10.500-.3q2.200 0 2.300 2.200l.3 7.500-15 1.500z" fill="#cb5a1b"/><circle cx="4.700" cy="3.900" r="1.500" fill="#17100d"/><circle cx="8.900" cy="5.500" r="1.500" fill="#17100d"/><circle cx="5.200" cy="7.900" r="1.500" fill="#17100d"/><circle cx="14.700" cy="2.900" r=".7" fill="#fff2e8"/><circle cx="14.700" cy="7" r=".7" fill="#2a160d"/><path d="M8.300 22.300a5.500 5.500 0 1 1 5.600-.2" fill="none" stroke="#fde8da" stroke-width="1.100"/><rect x="10.600" y="24.100" width="1.500" height="3.400" rx=".7" fill="#fde8da"/></svg></div><div class="pt"><span class="" style="display:inline-block;transform:scaleX(0.96);transform-origin:left center;">Bonoma for iPhon...</span></div><div class="abs" style="left:69px;top:42px"><svg class="flag" width="21" height="15" viewBox="0 0 21 15"><rect width="21" height="15" fill="#fff"/><rect width="21" height="1.5" fill="#c8506a"/><rect y="1.5" width="21" height="1.5" fill="#f3d5dc"/><rect y="3" width="21" height="1.1" fill="#c8506a"/><rect y="4.1" width="21" height="1" fill="#f5e3e7"/><rect y="5.1" width="21" height=".9" fill="#c8506a"/><rect y="7.1" width="21" height="1" fill="#b5163a"/><rect y="9" width="21" height="1.1" fill="#c8506a"/><rect y="10.1" width="21" height="1" fill="#f0cdd5"/><rect y="11.1" width="21" height="3.9" fill="#db90a3"/><rect width="8.1" height="8" fill="#0d4f86"/></svg></div><div class="pa"><span class="" style="display:inline-block;transform:scaleX(0.85);transform-origin:left center;">B0FXX3SQGT</span></div><div class="cc g" style="left:345px;top:24.500px">未进前三页</div><div class="cc g" style="left:502.5px"><span class="du">9</span></div><div class="cc g" style="left:658.75px"><span class="du">13</span></div><div class="c2" style="left:808.05px"><div class="n1">0</div><div class="n2">0.00%</div></div><div class="c2" style="left:950.55px"><div class="n1">2</div><div class="n2">67.00%</div></div><div class="c2" style="left:1093.05px"><div class="n1">2</div><div class="n2">67.00%</div></div><div class="c2" style="left:1249.3px"><div class="tl n1"><span class="dd">--</span><i></i><span class="dd">--</span><i></i><span class="dd">--</span></div><div class="tl n2"><span class="dd">--</span><i></i><span class="dd">--</span><i></i><span class="dd">--</span></div></div><div class="c2" style="left:1419.8px"><div class="tl n1"><span class="dd">--</span><i></i><span class="nn">2</span><i></i><span class="nn">2</span></div><div class="tl n2"><span class="nn">0%</span><i></i><span class="nn">67%</span><i></i><span class="nn">67%</span></div></div><div class="c2" style="left:1590.55px"><div class="tl n1"><span class="dd">--</span><i></i><span class="dd">--</span><i></i><span class="dd">--</span></div><div class="tl n2"><span class="dd">--</span><i></i><span class="dd">--</span><i></i><span class="dd">--</span></div></div><svg class="abs" style="left:1772.9px;top:28.5px" width="15" height="13.500" viewBox="0 0 15 13.500"><rect x=".8" y=".8" width="13.400" height="11.900" rx="2.600" fill="none" stroke="#6c64f4" stroke-width="1.300"/><path d="M3.600 8.500l2.700-3.400.9 2.600 3.700-3.600" fill="none" stroke="#6c64f4" stroke-width="2" stroke-linejoin="round" stroke-linecap="round"/></svg><svg class="abs" style="left:1799px;top:29px" width="13" height="13" viewBox="0 0 13 13"><path d="M6.500 0v13M0 6.500h13" fill="none" stroke="#6c64f4" stroke-width="1.300"/></svg></div>
<div class="row" style="top:588.5px"><div class="abs" style="left:21.8px;top:17.5px"><svg width="22" height="36" viewBox="0 0 22 36"><path d="M1 12q-1.500 8 0 15l1.500 8.500h8l-5-24z" fill="#f5ebe5"/><rect x="17" y="14" width="4.600" height="2.600" rx="1.300" fill="#f3d3c3"/><rect x="17.200" y="18.600" width="4.600" height="2.600" rx="1.300" fill="#f0c9b8"/><rect x="16.500" y="23.800" width="5.300" height="2.600" rx="1.300" fill="#f4d2c2"/><path d="M3.100 11.500l15-1.500 .9 20.500q0 2-2 2.200l-11 .8q-1.800 0-2-2z" fill="#ef4b04"/><path d="M2.100 3q0-2.200 2.200-2.400l10.500-.3q2.200 0 2.300 2.200l.3 7.500-15 1.500z" fill="#f2520b"/><circle cx="4.700" cy="3.900" r="1.500" fill="#17100d"/><circle cx="8.900" cy="5.500" r="1.500" fill="#17100d"/><circle cx="5.200" cy="7.900" r="1.500" fill="#17100d"/><circle cx="14.700" cy="2.900" r=".7" fill="#ffe9dc"/><circle cx="14.700" cy="7" r=".7" fill="#2a160d"/><path d="M8.300 22.300a5.500 5.500 0 1 1 5.600-.2" fill="none" stroke="#ff8a12" stroke-width="1.100"/><rect x="10.600" y="24.100" width="1.500" height="3.400" rx=".7" fill="#ff8a12"/></svg></div><div class="pt"><span class="" style="display:inline-block;transform:scaleX(0.96);transform-origin:left center;">Bonoma for iPhon...</span></div><div class="abs" style="left:69px;top:42px"><svg class="flag" width="21" height="15" viewBox="0 0 21 15"><rect width="21" height="15" fill="#fff"/><rect width="21" height="1.5" fill="#c8506a"/><rect y="1.5" width="21" height="1.5" fill="#f3d5dc"/><rect y="3" width="21" height="1.1" fill="#c8506a"/><rect y="4.1" width="21" height="1" fill="#f5e3e7"/><rect y="5.1" width="21" height=".9" fill="#c8506a"/><rect y="7.1" width="21" height="1" fill="#b5163a"/><rect y="9" width="21" height="1.1" fill="#c8506a"/><rect y="10.1" width="21" height="1" fill="#f0cdd5"/><rect y="11.1" width="21" height="3.9" fill="#db90a3"/><rect width="8.1" height="8" fill="#0d4f86"/></svg></div><div class="pa"><span class="" style="display:inline-block;transform:scaleX(0.86);transform-origin:left center;">B0FXX2LBGP</span></div><div class="cc g" style="left:345px;top:24.500px">未进前三页</div><div class="cc g" style="left:502.5px"><span class="du">6</span></div><div class="cc g" style="left:657.75px;top:24.500px">未进前三页</div><div class="c2" style="left:808.05px"><div class="n1">0</div><div class="n2">0.00%</div></div><div class="c2" style="left:950.55px"><div class="n1">2</div><div class="n2">67.00%</div></div><div class="c2" style="left:1093.05px"><div class="n1">0</div><div class="n2">0.00%</div></div><div class="c2" style="left:1249.3px"><div class="tl n1"><span class="dd">--</span><i></i><span class="nn">1</span><i></i><span class="dd">--</span></div><div class="tl n2"><span class="nn">0%</span><i></i><span class="nn">33%</span><i></i><span class="nn">0%</span></div></div><div class="c2" style="left:1419.8px"><div class="tl n1"><span class="dd">--</span><i></i><span class="dd">--</span><i></i><span class="dd">--</span></div><div class="tl n2"><span class="dd">--</span><i></i><span class="dd">--</span><i></i><span class="dd">--</span></div></div><div class="c2" style="left:1590.55px"><div class="tl n1"><span class="dd">--</span><i></i><span class="nn">1</span><i></i><span class="dd">--</span></div><div class="tl n2"><span class="nn">0%</span><i></i><span class="nn">33%</span><i></i><span class="nn">0%</span></div></div><svg class="abs" style="left:1772.9px;top:28.5px" width="15" height="13.500" viewBox="0 0 15 13.500"><rect x=".8" y=".8" width="13.400" height="11.900" rx="2.600" fill="none" stroke="#6c64f4" stroke-width="1.300"/><path d="M3.600 8.500l2.700-3.400.9 2.600 3.700-3.600" fill="none" stroke="#6c64f4" stroke-width="2" stroke-linejoin="round" stroke-linecap="round"/></svg><svg class="abs" style="left:1799px;top:29px" width="13" height="13" viewBox="0 0 13 13"><path d="M6.500 0v13M0 6.500h13" fill="none" stroke="#6c64f4" stroke-width="1.300"/></svg></div><div class="rb" style="top:306px"></div><div class="rb" style="top:376px"></div><div class="rb" style="top:447px"></div><div class="rb" style="top:518px"></div><div class="rb" style="top:588px"></div></div>
<!--DE-->
</section>
<div id="wml"><!--WS--><b style="left:-5px;top:-20px">17185</b><b style="left:-5px;top:45px">17185</b><b style="left:-5px;top:110px">17185</b><b style="left:-5px;top:176px">17185</b><b style="left:-5px;top:241px">17185</b><b style="left:-5px;top:306px">17185</b><b style="left:-5px;top:371px">17185</b><b style="left:-5px;top:436px">17185</b><b style="left:-5px;top:502px">17185</b><b style="left:-5px;top:567px">17185</b><b style="left:-5px;top:632px">17185</b><b style="left:-5px;top:697px">17185</b><b style="left:-5px;top:762px">17185</b><b style="left:-5px;top:828px">17185</b><b style="left:169px;top:-25px">17185</b><b style="left:82px;top:10px">17185</b><b style="left:169px;top:40px">17185</b><b style="left:82px;top:75px">17185</b><b style="left:169px;top:106px">17185</b><b style="left:82px;top:141px">17185</b><b style="left:169px;top:171px">17185</b><b style="left:82px;top:206px">17185</b><b style="left:169px;top:236px">17185</b><b style="left:82px;top:271px">17185</b><b style="left:169px;top:301px">17185</b><b style="left:82px;top:336px">17185</b><b style="left:169px;top:366px">17185</b><b style="left:82px;top:401px">17185</b><b style="left:169px;top:432px">17185</b><b style="left:82px;top:467px">17185</b><b style="left:169px;top:497px">17185</b><b style="left:82px;top:532px">17185</b><b style="left:169px;top:562px">17185</b><b style="left:82px;top:597px">17185</b><b style="left:169px;top:627px">17185</b><b style="left:82px;top:662px">17185</b><b style="left:169px;top:692px">17185</b><b style="left:82px;top:727px">17185</b><b style="left:169px;top:758px">17185</b><b style="left:82px;top:793px">17185</b><b style="left:169px;top:823px">17185</b><b style="left:82px;top:858px">17185</b><b style="left:343px;top:-29px">17185</b><b style="left:256px;top:6px">17185</b><b style="left:343px;top:36px">17185</b><b style="left:256px;top:71px">17185</b><b style="left:343px;top:101px">17185</b><b style="left:256px;top:136px">17185</b><b style="left:343px;top:166px">17185</b><b style="left:256px;top:201px">17185</b><b style="left:343px;top:232px">17185</b><b style="left:256px;top:266px">17185</b><b style="left:343px;top:297px">17185</b><b style="left:256px;top:332px">17185</b><b style="left:343px;top:362px">17185</b><b style="left:256px;top:397px">17185</b><b style="left:343px;top:427px">17185</b><b style="left:256px;top:462px">17185</b><b style="left:343px;top:492px">17185</b><b style="left:256px;top:527px">17185</b><b style="left:343px;top:558px">17185</b><b style="left:256px;top:592px">17185</b><b style="left:343px;top:623px">17185</b><b style="left:256px;top:658px">17185</b><b style="left:343px;top:688px">17185</b><b style="left:256px;top:723px">17185</b><b style="left:343px;top:753px">17185</b><b style="left:256px;top:788px">17185</b><b style="left:343px;top:818px">17185</b><b style="left:256px;top:853px">17185</b><b style="left:343px;top:884px">17185</b><b style="left:430px;top:1px">17185</b><b style="left:517px;top:31px">17185</b><b style="left:430px;top:66px">17185</b><b style="left:517px;top:96px">17185</b><b style="left:430px;top:131px">17185</b><b style="left:517px;top:162px">17185</b><b style="left:430px;top:197px">17185</b><b style="left:517px;top:227px">17185</b><b style="left:430px;top:262px">17185</b><b style="left:517px;top:292px">17185</b><b style="left:430px;top:327px">17185</b><b style="left:517px;top:357px">17185</b><b style="left:430px;top:392px">17185</b><b style="left:517px;top:422px">17185</b><b style="left:430px;top:457px">17185</b><b style="left:517px;top:488px">17185</b><b style="left:430px;top:523px">17185</b><b style="left:517px;top:553px">17185</b><b style="left:430px;top:588px">17185</b><b style="left:517px;top:618px">17185</b><b style="left:430px;top:653px">17185</b><b style="left:517px;top:683px">17185</b><b style="left:430px;top:718px">17185</b><b style="left:517px;top:748px">17185</b><b style="left:430px;top:783px">17185</b><b style="left:517px;top:814px">17185</b><b style="left:430px;top:849px">17185</b><b style="left:517px;top:879px">17185</b><b style="left:604px;top:-4px">17185</b><b style="left:692px;top:27px">17185</b><b style="left:604px;top:62px">17185</b><b style="left:692px;top:92px">17185</b><b style="left:604px;top:127px">17185</b><b style="left:692px;top:157px">17185</b><b style="left:604px;top:192px">17185</b><b style="left:692px;top:222px">17185</b><b style="left:604px;top:257px">17185</b><b style="left:692px;top:288px">17185</b><b style="left:604px;top:322px">17185</b><b style="left:692px;top:353px">17185</b><b style="left:604px;top:388px">17185</b><b style="left:692px;top:418px">17185</b><b style="left:604px;top:453px">17185</b><b style="left:692px;top:483px">17185</b><b style="left:604px;top:518px">17185</b><b style="left:692px;top:548px">17185</b><b style="left:604px;top:583px">17185</b><b style="left:692px;top:614px">17185</b><b style="left:604px;top:648px">17185</b><b style="left:692px;top:679px">17185</b><b style="left:604px;top:714px">17185</b><b style="left:692px;top:744px">17185</b><b style="left:604px;top:779px">17185</b><b style="left:692px;top:809px">17185</b><b style="left:604px;top:844px">17185</b><b style="left:692px;top:874px">17185</b><b style="left:779px;top:-8px">17185</b><b style="left:866px;top:22px">17185</b><b style="left:779px;top:57px">17185</b><b style="left:866px;top:87px">17185</b><b style="left:779px;top:122px">17185</b><b style="left:866px;top:153px">17185</b><b style="left:779px;top:187px">17185</b><b style="left:866px;top:218px">17185</b><b style="left:779px;top:253px">17185</b><b style="left:866px;top:283px">17185</b><b style="left:779px;top:318px">17185</b><b style="left:866px;top:348px">17185</b><b style="left:779px;top:383px">17185</b><b style="left:866px;top:413px">17185</b><b style="left:779px;top:448px">17185</b><b style="left:866px;top:479px">17185</b><b style="left:779px;top:513px">17185</b><b style="left:866px;top:544px">17185</b><b style="left:779px;top:579px">17185</b><b style="left:866px;top:609px">17185</b><b style="left:779px;top:644px">17185</b><b style="left:866px;top:674px">17185</b><b style="left:779px;top:709px">17185</b><b style="left:866px;top:739px">17185</b><b style="left:779px;top:774px">17185</b><b style="left:866px;top:804px">17185</b><b style="left:779px;top:839px">17185</b><b style="left:866px;top:870px">17185</b><b style="left:953px;top:-13px">17185</b><b style="left:1040px;top:18px">17185</b><b style="left:953px;top:52px">17185</b><b style="left:1040px;top:83px">17185</b><b style="left:953px;top:118px">17185</b><b style="left:1040px;top:148px">17185</b><b style="left:953px;top:183px">17185</b><b style="left:1040px;top:213px">17185</b><b style="left:953px;top:248px">17185</b><b style="left:1040px;top:278px">17185</b><b style="left:953px;top:313px">17185</b><b style="left:1040px;top:344px">17185</b><b style="left:953px;top:378px">17185</b><b style="left:1040px;top:409px">17185</b><b style="left:953px;top:444px">17185</b><b style="left:1040px;top:474px">17185</b><b style="left:953px;top:509px">17185</b><b style="left:1040px;top:539px">17185</b><b style="left:953px;top:574px">17185</b><b style="left:1040px;top:604px">17185</b><b style="left:953px;top:639px">17185</b><b style="left:1040px;top:670px">17185</b><b style="left:953px;top:704px">17185</b><b style="left:1040px;top:735px">17185</b><b style="left:953px;top:770px">17185</b><b style="left:1040px;top:800px">17185</b><b style="left:953px;top:835px">17185</b><b style="left:1040px;top:865px">17185</b><b style="left:1127px;top:-17px">17185</b><b style="left:1214px;top:13px">17185</b><b style="left:1127px;top:48px">17185</b><b style="left:1214px;top:78px">17185</b><b style="left:1127px;top:113px">17185</b><b style="left:1214px;top:143px">17185</b><b style="left:1127px;top:178px">17185</b><b style="left:1214px;top:208px">17185</b><b style="left:1127px;top:243px">17185</b><b style="left:1214px;top:274px">17185</b><b style="left:1127px;top:309px">17185</b><b style="left:1214px;top:339px">17185</b><b style="left:1127px;top:374px">17185</b><b style="left:1214px;top:404px">17185</b><b style="left:1127px;top:439px">17185</b><b style="left:1214px;top:469px">17185</b><b style="left:1127px;top:504px">17185</b><b style="left:1214px;top:534px">17185</b><b style="left:1127px;top:569px">17185</b><b style="left:1214px;top:600px">17185</b><b style="left:1127px;top:635px">17185</b><b style="left:1214px;top:665px">17185</b><b style="left:1127px;top:700px">17185</b><b style="left:1214px;top:730px">17185</b><b style="left:1127px;top:765px">17185</b><b style="left:1214px;top:795px">17185</b><b style="left:1127px;top:830px">17185</b><b style="left:1214px;top:860px">17185</b><b style="left:1301px;top:-22px">17185</b><b style="left:1388px;top:8px">17185</b><b style="left:1301px;top:43px">17185</b><b style="left:1388px;top:74px">17185</b><b style="left:1301px;top:108px">17185</b><b style="left:1388px;top:139px">17185</b><b style="left:1301px;top:174px">17185</b><b style="left:1388px;top:204px">17185</b><b style="left:1301px;top:239px">17185</b><b style="left:1388px;top:269px">17185</b><b style="left:1301px;top:304px">17185</b><b style="left:1388px;top:334px">17185</b><b style="left:1301px;top:369px">17185</b><b style="left:1388px;top:400px">17185</b><b style="left:1301px;top:434px">17185</b><b style="left:1388px;top:465px">17185</b><b style="left:1301px;top:500px">17185</b><b style="left:1388px;top:530px">17185</b><b style="left:1301px;top:565px">17185</b><b style="left:1388px;top:595px">17185</b><b style="left:1301px;top:630px">17185</b><b style="left:1388px;top:660px">17185</b><b style="left:1301px;top:695px">17185</b><b style="left:1388px;top:726px">17185</b><b style="left:1301px;top:760px">17185</b><b style="left:1388px;top:791px">17185</b><b style="left:1301px;top:826px">17185</b><b style="left:1388px;top:856px">17185</b><b style="left:1476px;top:-27px">17185</b><b style="left:1563px;top:4px">17185</b><b style="left:1476px;top:39px">17185</b><b style="left:1563px;top:69px">17185</b><b style="left:1476px;top:104px">17185</b><b style="left:1563px;top:134px">17185</b><b style="left:1476px;top:169px">17185</b><b style="left:1563px;top:199px">17185</b><b style="left:1476px;top:234px">17185</b><b style="left:1563px;top:264px">17185</b><b style="left:1476px;top:299px">17185</b><b style="left:1563px;top:330px">17185</b><b style="left:1476px;top:365px">17185</b><b style="left:1563px;top:395px">17185</b><b style="left:1476px;top:430px">17185</b><b style="left:1563px;top:460px">17185</b><b style="left:1476px;top:495px">17185</b><b style="left:1563px;top:525px">17185</b><b style="left:1476px;top:560px">17185</b><b style="left:1563px;top:590px">17185</b><b style="left:1476px;top:625px">17185</b><b style="left:1563px;top:656px">17185</b><b style="left:1476px;top:691px">17185</b><b style="left:1563px;top:721px">17185</b><b style="left:1476px;top:756px">17185</b><b style="left:1563px;top:786px">17185</b><b style="left:1476px;top:821px">17185</b><b style="left:1563px;top:851px">17185</b><b style="left:1737px;top:-1px">17185</b><b style="left:1650px;top:34px">17185</b><b style="left:1737px;top:64px">17185</b><b style="left:1650px;top:99px">17185</b><b style="left:1737px;top:130px">17185</b><b style="left:1650px;top:164px">17185</b><b style="left:1737px;top:195px">17185</b><b style="left:1650px;top:230px">17185</b><b style="left:1737px;top:260px">17185</b><b style="left:1650px;top:295px">17185</b><b style="left:1737px;top:325px">17185</b><b style="left:1650px;top:360px">17185</b><b style="left:1737px;top:390px">17185</b><b style="left:1650px;top:425px">17185</b><b style="left:1737px;top:456px">17185</b><b style="left:1650px;top:490px">17185</b><b style="left:1737px;top:521px">17185</b><b style="left:1650px;top:556px">17185</b><b style="left:1737px;top:586px">17185</b><b style="left:1650px;top:621px">17185</b><b style="left:1737px;top:651px">17185</b><b style="left:1650px;top:686px">17185</b><b style="left:1737px;top:716px">17185</b><b style="left:1650px;top:751px">17185</b><b style="left:1737px;top:782px">17185</b><b style="left:1650px;top:816px">17185</b><b style="left:1737px;top:847px">17185</b><b style="left:1650px;top:882px">17185</b><b style="left:1911px;top:-6px">17185</b><b style="left:1824px;top:29px">17185</b><b style="left:1911px;top:60px">17185</b><b style="left:1824px;top:95px">17185</b><b style="left:1911px;top:125px">17185</b><b style="left:1824px;top:160px">17185</b><b style="left:1911px;top:190px">17185</b><b style="left:1824px;top:225px">17185</b><b style="left:1911px;top:255px">17185</b><b style="left:1824px;top:290px">17185</b><b style="left:1911px;top:320px">17185</b><b style="left:1824px;top:355px">17185</b><b style="left:1911px;top:386px">17185</b><b style="left:1824px;top:421px">17185</b><b style="left:1911px;top:451px">17185</b><b style="left:1824px;top:486px">17185</b><b style="left:1911px;top:516px">17185</b><b style="left:1824px;top:551px">17185</b><b style="left:1911px;top:581px">17185</b><b style="left:1824px;top:616px">17185</b><b style="left:1911px;top:646px">17185</b><b style="left:1824px;top:681px">17185</b><b style="left:1911px;top:712px">17185</b><b style="left:1824px;top:747px">17185</b><b style="left:1911px;top:777px">17185</b><b style="left:1824px;top:812px">17185</b><b style="left:1911px;top:842px">17185</b><b style="left:1824px;top:877px">17185</b><!--WE--></div>
</body>
</html>
